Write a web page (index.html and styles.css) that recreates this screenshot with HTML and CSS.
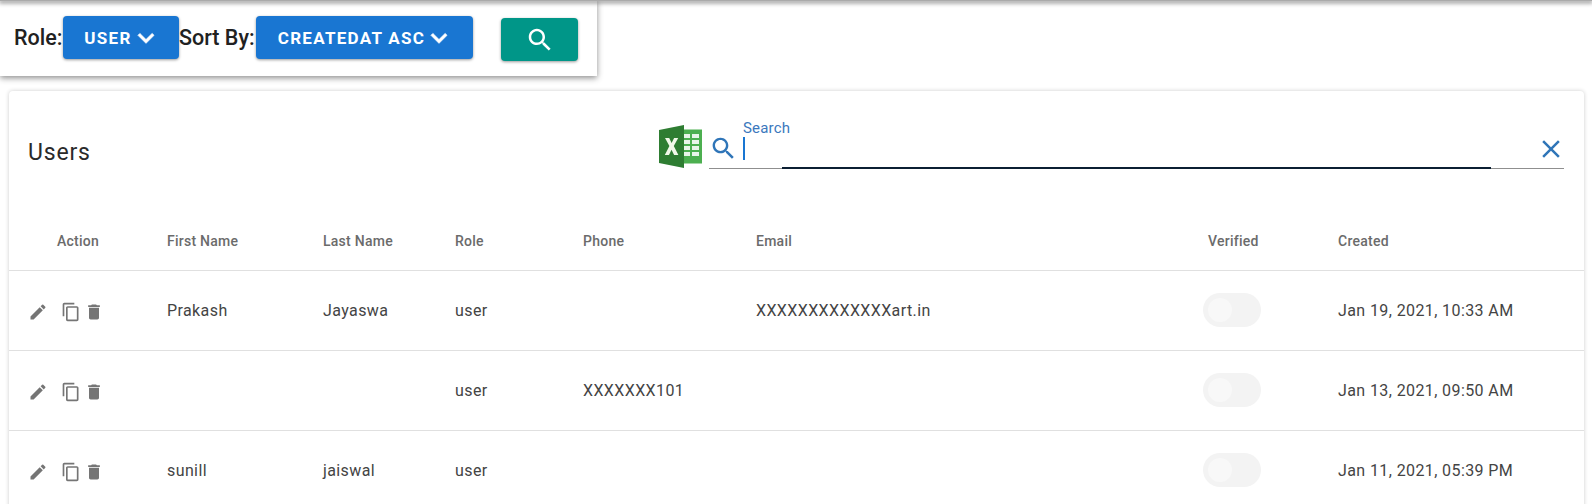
FILE: index.html
```html
<!DOCTYPE html>
<html lang="en">
<head>
<meta charset="utf-8">
<title>Users</title>
<link rel="stylesheet" href="styles.css">
</head>
<body>
<div class="topline"></div>
<div class="filters">
  <span class="label label-role">Role:</span>
  <button class="btn btn-role">USER <svg class="chev" viewBox="0 0 24 24"><path d="M7.41 8.59 12 13.17l4.59-4.58L18 10l-6 6-6-6z"/></svg></button>
  <span class="label label-sort">Sort By:</span>
  <button class="btn btn-sort">CREATEDAT ASC <svg class="chev" viewBox="0 0 24 24"><path d="M7.41 8.59 12 13.17l4.59-4.58L18 10l-6 6-6-6z"/></svg></button>
  <button class="btn-go"><svg class="go-ic" viewBox="0 0 24 24"><path d="M15.5 14h-.79l-.28-.27C15.41 12.59 16 11.11 16 9.5 16 5.91 13.09 3 9.5 3S3 5.91 3 9.5 5.91 16 9.5 16c1.61 0 3.09-.59 4.23-1.57l.27.28v.79l5 4.99L20.49 19l-4.99-5zm-6 0C7.01 14 5 11.99 5 9.5S7.01 5 9.5 5 14 7.01 14 9.5 11.99 14 9.5 14z"/></svg></button>
</div>
<main class="card">
  <div class="toolbar">
    <h2 class="title">Users</h2>
    <svg class="excel" viewBox="0 0 43 43">
      <rect x="18" y="4.500" width="25" height="34" fill="#4caf50"/>
      <path d="M25 9h6v4h-6zM33 9h7v4h-7zM25 15h6v4h-6zM33 15h7v4h-7zM25 21h6v4h-6zM33 21h7v4h-7zM25 27h6v4h-6zM33 27h7v4h-7z" fill="#e8f5e9"/>
      <path d="M0 5 25 0v43L0 38z" fill="#2e7d32"/>
      <path d="M6 13h4.200l2.400 5 2.500-5h4.100l-4.400 8 4.600 9h-4.300l-2.600-5.200L10 30H5.800l4.600-9z" fill="#f1f8e9"/>
    </svg>
    <div class="search">
      <span class="search-label">Search</span>
      <svg class="s-ic" viewBox="0 0 24 24"><path d="M15.5 14h-.79l-.28-.27C15.41 12.59 16 11.11 16 9.5 16 5.91 13.09 3 9.5 3S3 5.91 3 9.5 5.91 16 9.5 16c1.61 0 3.09-.59 4.23-1.57l.27.28v.79l5 4.99L20.49 19l-4.99-5zm-6 0C7.01 14 5 11.99 5 9.5S7.01 5 9.5 5 14 7.01 14 9.5 11.99 14 9.5 14z"/></svg>
      <span class="caret"></span>
      <svg class="x-ic" viewBox="0 0 24 24"><path d="M19 6.41 17.59 5 12 10.59 6.41 5 5 6.41 10.59 12 5 17.59 6.410 19 12 13.410 17.590 19 19 17.590 13.410 12z"/></svg>
      <span class="focus-line"></span>
    </div>
  </div>
  <table class="grid">
    <colgroup>
      <col class="c-act"><col class="c-first"><col class="c-last"><col class="c-role"><col class="c-phone"><col class="c-email"><col class="c-ver"><col class="c-date">
    </colgroup>
    <thead>
      <tr><th class="th-act">Action</th><th>First Name</th><th>Last Name</th><th>Role</th><th>Phone</th><th>Email</th><th>Verified</th><th>Created</th></tr>
    </thead>
    <tbody>
      <tr>
        <td><div class="acts"><svg class="ic ic-edit" viewBox="0 0 24 24"><path d="M3 17.250V21h3.750L17.810 9.940l-3.750-3.750L3 17.250zM20.710 7.040a1 1 0 0 0 0-1.410l-2.340-2.340a1 1 0 0 0-1.410 0l-1.830 1.830 3.750 3.750 1.830-1.830z"/></svg><svg class="ic ic-copy" viewBox="0 0 24 24"><path d="M16 1H4c-1.100 0-2 .9-2 2v14h2V3h12V1zm3 4H8c-1.100 0-2 .9-2 2v14c0 1.100.9 2 2 2h11c1.100 0 2-.9 2-2V7c0-1.100-.9-2-2-2zm0 16H8V7h11v14z"/></svg><svg class="ic ic-del" viewBox="0 0 24 24"><path d="M6 19c0 1.100.9 2 2 2h8c1.100 0 2-.9 2-2V7H6v12zM19 4h-3.500l-1-1h-5l-1 1H5v2h14V4z"/></svg></div></td>
        <td>Prakash</td><td>Jayaswa</td><td>user</td><td></td><td>XXXXXXXXXXXXXart.in</td>
        <td><span class="switch"><span class="knob"></span></span></td><td>Jan 19, 2021, 10:33 AM</td>
      </tr>
      <tr>
        <td><div class="acts"><svg class="ic ic-edit" viewBox="0 0 24 24"><path d="M3 17.250V21h3.750L17.810 9.940l-3.750-3.750L3 17.250zM20.710 7.040a1 1 0 0 0 0-1.410l-2.340-2.340a1 1 0 0 0-1.410 0l-1.830 1.830 3.750 3.750 1.830-1.830z"/></svg><svg class="ic ic-copy" viewBox="0 0 24 24"><path d="M16 1H4c-1.100 0-2 .9-2 2v14h2V3h12V1zm3 4H8c-1.100 0-2 .9-2 2v14c0 1.100.9 2 2 2h11c1.100 0 2-.9 2-2V7c0-1.100-.9-2-2-2zm0 16H8V7h11v14z"/></svg><svg class="ic ic-del" viewBox="0 0 24 24"><path d="M6 19c0 1.100.9 2 2 2h8c1.100 0 2-.9 2-2V7H6v12zM19 4h-3.500l-1-1h-5l-1 1H5v2h14V4z"/></svg></div></td>
        <td></td><td></td><td>user</td><td>XXXXXXX101</td><td></td>
        <td><span class="switch"><span class="knob"></span></span></td><td>Jan 13, 2021, 09:50 AM</td>
      </tr>
      <tr>
        <td><div class="acts"><svg class="ic ic-edit" viewBox="0 0 24 24"><path d="M3 17.250V21h3.750L17.810 9.940l-3.750-3.750L3 17.250zM20.710 7.040a1 1 0 0 0 0-1.410l-2.340-2.340a1 1 0 0 0-1.410 0l-1.830 1.830 3.750 3.750 1.830-1.830z"/></svg><svg class="ic ic-copy" viewBox="0 0 24 24"><path d="M16 1H4c-1.100 0-2 .9-2 2v14h2V3h12V1zm3 4H8c-1.100 0-2 .9-2 2v14c0 1.100.9 2 2 2h11c1.100 0 2-.9 2-2V7c0-1.100-.9-2-2-2zm0 16H8V7h11v14z"/></svg><svg class="ic ic-del" viewBox="0 0 24 24"><path d="M6 19c0 1.100.9 2 2 2h8c1.100 0 2-.9 2-2V7H6v12zM19 4h-3.500l-1-1h-5l-1 1H5v2h14V4z"/></svg></div></td>
        <td>sunill</td><td>jaiswal</td><td>user</td><td></td><td></td>
        <td><span class="switch"><span class="knob"></span></span></td><td>Jan 11, 2021, 05:39 PM</td>
      </tr>
    </tbody>
  </table>
</main>
</body>
</html>
```
FILE: styles.css
```css
* { box-sizing: border-box; }
html, body { margin: 0; height: 504px; overflow: hidden; background: #fff; }
body { font-family: Roboto, "Liberation Sans", sans-serif; color: #212121; }
.topline { height: 1px; background: #aaa; box-shadow: 0 1px 4px 1px rgba(0,0,0,.5); position: relative; z-index: 2; }
.filters {
  width: 597px; height: 76px; margin-top: -1px; padding: 16px 0 0 14px;
  display: flex; align-items: flex-start; background: #fff;
  box-shadow: 0 2px 6px rgba(0,0,0,.45);
}
.label { font-size: 21.5px; font-weight: 500; line-height: 43px; color: #212121; white-space: nowrap; }
.label-role { width: 49px; }
.label-sort { width: 77px; }
.btn {
  height: 43px; border: 0; border-radius: 4px; background: #1976d2; color: #fff; padding: 0;
  font: 700 17px Roboto, sans-serif; letter-spacing: 1.3px;
  display: inline-flex; align-items: center; justify-content: center; gap: 0;
  box-shadow: 0 1px 3px rgba(0,0,0,.4);
}
.btn-role { width: 116px; }
.btn-sort { width: 217px; }
.chev { width: 32px; height: 32px; fill: #fff; stroke: #fff; stroke-width: .6; margin-left: -2px; margin-right: -4px; }
.btn-go {
  width: 77px; height: 43px; margin: 2px 0 0 28px; border: 0; border-radius: 4px; background: #009688;
  display: flex; align-items: center; justify-content: center; box-shadow: 0 1px 3px rgba(0,0,0,.4);
}
.go-ic { width: 30px; height: 30px; fill: #fff; }
.card {
  margin: 15px 8px 0 9px; background: #fff; border-radius: 4px;
  box-shadow: 0 0 4px rgba(0,0,0,.2);
}
.toolbar { height: 122px; padding: 0 20px 0 19px; display: flex; align-items: flex-start; }
.title { margin: 47px 0 0; font-size: 23px; font-weight: 400; line-height: 30px; letter-spacing: .8px; width: 631px; color: #2a2a2a; }
.excel { width: 43px; height: 43px; margin-top: 34px; flex: none; }
.search { position: relative; flex: 1; height: 78px; margin: 0 0 0 7px; }
.search::after { content: ""; position: absolute; left: 0; right: 0; top: 77px; height: 1px; background: #8f8f8f; }
.search-label { position: absolute; left: 34px; top: 28px; font-size: 15px; color: #3b78bd; letter-spacing: .2px; }
.s-ic { position: absolute; left: 0; top: 43px; width: 29px; height: 29px; fill: #2f75b8; }
.caret { position: absolute; left: 34px; top: 46px; width: 2px; height: 23px; background: #1976d2; }
.x-ic { position: absolute; right: -2px; top: 43px; width: 30px; height: 30px; fill: #2f75b8; }
.focus-line { position: absolute; left: 73px; right: 73px; top: 76px; height: 2px; background: #0b1f33; z-index: 1; }
.grid { width: 100%; border-collapse: collapse; table-layout: fixed; font-size: 16px; }
.c-act { width: 158px; } .c-first { width: 156px; } .c-last { width: 132px; } .c-role { width: 128px; }
.c-phone { width: 173px; } .c-email { width: 452px; } .c-ver { width: 130px; } .c-date { width: auto; }
th { height: 57px; text-align: left; font-size: 14px; font-weight: 500; color: #6b6b6b; letter-spacing: .25px; border-bottom: 1px solid #e0e0e0; padding: 0; }
.th-act { padding-left: 48px; }
td { height: 80px; padding: 0; border-bottom: 1px solid #e0e0e0; color: #444; letter-spacing: .4px; }
.acts { display: flex; align-items: center; padding: 3px 0 0 18.500px; }
.ic { width: 20px; height: 20px; fill: #757575; flex: none; }
.ic-copy { margin-left: 13px; }
.ic-del { margin-left: 3px; }
.switch { display: block; position: relative; width: 58px; height: 34px; border-radius: 17px; background: #f3f3f3; margin-left: -5px; }
.knob { position: absolute; left: 5px; top: 5px; width: 24px; height: 24px; border-radius: 50%; background: #f8f8f8; }
```
